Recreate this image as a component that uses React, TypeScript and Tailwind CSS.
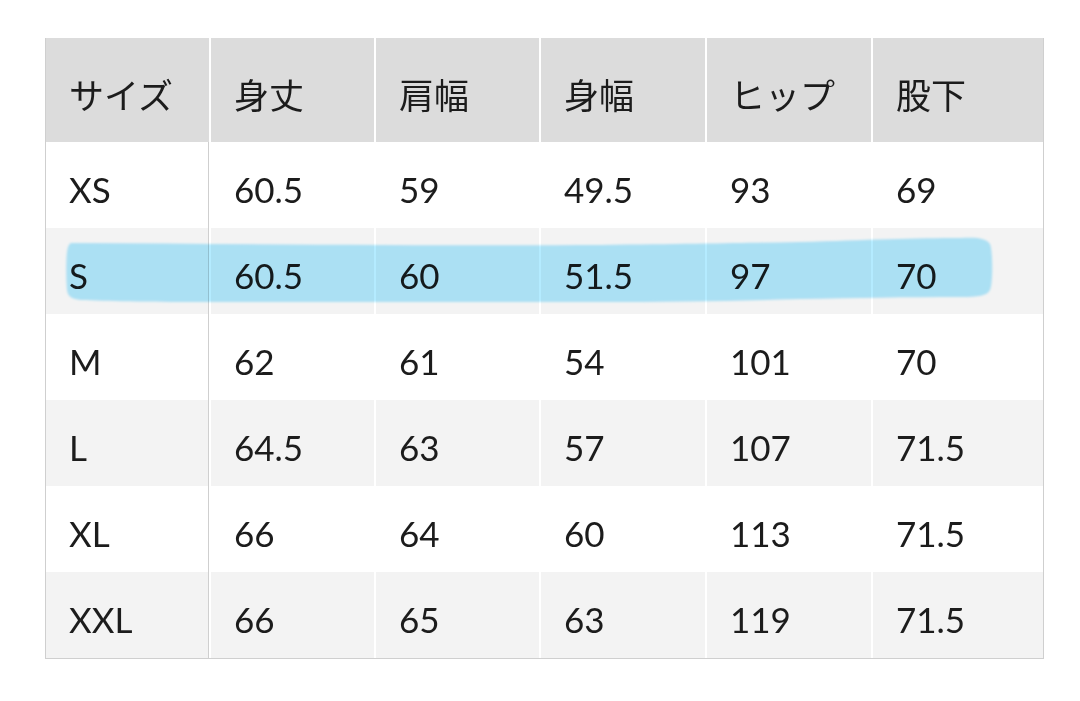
const headers = ['サイズ', '身丈', '肩幅', '身幅', 'ヒップ', '股下'];

const rows = [
  ['XS', '60.5', '59', '49.5', '93', '69'],
  ['S', '60.5', '60', '51.5', '97', '70'],
  ['M', '62', '61', '54', '101', '70'],
  ['L', '64.5', '63', '57', '107', '71.5'],
  ['XL', '66', '64', '60', '113', '71.5'],
  ['XXL', '66', '65', '63', '119', '71.5'],
];

// widths of each column (px), last one fills the rest
const widths = ['w-[163px]', 'w-[163px]', 'w-[163px]', 'w-[164px]', 'w-[164px]', 'flex-1'];

function Highlight() {
  // hand drawn marker stroke over the S row
  return (
    <svg
      className="pointer-events-none absolute left-0 top-0 mix-blend-multiply"
      width={999}
      height={622}
      viewBox="0 0 999 622"
    >
      <defs>
        <filter id="soft">
          <feGaussianBlur stdDeviation="0.9" />
        </filter>
      </defs>
      <path
        d="M25 205 C 200 206, 400 208, 555 207 C 650 206, 700 205, 755 204 C 820 202, 870 200, 915 200 C 930 199, 940 200, 944 206 C 947 214, 947 245, 944 252 C 941 258, 932 259, 915 259 C 860 259, 810 260, 755 261 C 690 263, 620 264, 555 264 C 420 264, 280 264, 155 264 C 100 264, 60 263, 35 262 C 26 261, 22 259, 21 252 C 20 240, 20 222, 21 214 C 22 208, 23 206, 25 205 Z"
        fill="#b4ebff"
        filter="url(#soft)"
      />
    </svg>
  );
}

export default function App() {
  return (
    <div
      className="min-h-[701px] w-[1080px] bg-white pl-[45px] pt-[38px] text-[#1c1c1c]"
      style={{ fontFamily: 'Lato, "Noto Sans CJK JP", sans-serif' }}
    >
      <div className="relative w-[999px] border-x border-b border-[#cfcfcf]">
        {/* header */}
        <div className="flex h-[104px] gap-[2px] bg-white">
          {headers.map((h, i) => (
            <div
              key={h}
              className={`${widths[i]} flex items-center bg-[#dcdcdc] pl-[23px] pt-[10px] text-[35px] font-normal`}
            >
              {h}
            </div>
          ))}
        </div>

        {/* body */}
        {rows.map((r, ri) => (
          <div
            key={r[0]}
            className={`flex h-[86px] gap-[2px] bg-white ${ri === 5 ? 'h-[85px]' : ''}`}
          >
            {r.map((c, ci) => (
              <div
                key={ci}
                className={`${widths[ci]} flex items-center pl-[23px] pt-[8px] text-[35px] ${
                  ri % 2 === 1 ? 'bg-[#f3f3f3]' : 'bg-white'
                } ${ci === 0 ? 'border-r border-[#cfcfcf]' : ''}`}
              >
                {c}
              </div>
            ))}
          </div>
        ))}

        <Highlight />
      </div>
    </div>
  );
}
